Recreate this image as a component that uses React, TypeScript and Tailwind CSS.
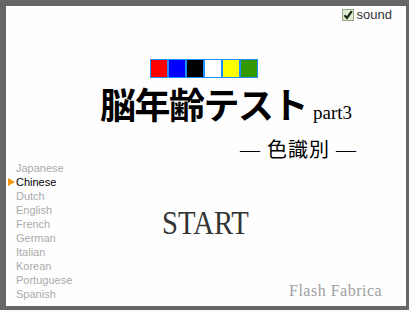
import { useState } from 'react';

const LANGS = ['Japanese', 'Chinese', 'Dutch', 'English', 'French', 'German', 'Italian', 'Korean', 'Portuguese', 'Spanish'];
const SWATCHES = ['bg-[#ff0000]', 'bg-[#0000ff]', 'bg-black', 'bg-white', 'bg-[#ffff00]', 'bg-[#339900]'];

export default function App() {
  const [sound, setSound] = useState(true);
  const [lang, setLang] = useState('Chinese');

  return (
    <div className="h-[313px] w-[412px] bg-[#fbfbfb]">
      <div className="flex h-[310px] w-[409px] flex-col border-t-[6px] border-r-[3px] border-b-[4px] border-l-[6px] border-[#666666] bg-[#fefefe]">
        {/* sound toggle */}
        <div className="flex justify-end pt-[3px] pr-[14px]">
          <label
            onClick={() => setSound(!sound)}
            className="flex cursor-pointer items-center gap-[3px] font-['Liberation_Sans',sans-serif] text-[13px] leading-[12px] text-[#333]"
          >
            <span className="flex h-[12px] w-[12px] items-center justify-center border border-[#9aa88a] bg-[#dfeccf]">
              {sound && (
                <svg width="10" height="10" viewBox="0 0 10 10">
                  <path d="M1.5 5.2 L4 8 L8.8 1.2" fill="none" stroke="#1a2a1a" strokeWidth="2.2" />
                </svg>
              )}
            </span>
            sound
          </label>
        </div>

        {/* color strip */}
        <div className="mt-[38px] flex pl-[144px]">
          {SWATCHES.map((c) => (
            <div key={c} className={`h-[19px] w-[18px] border border-[#1e8fff] ${c}`} />
          ))}
        </div>

        {/* title */}
        <div className="mt-[9px] flex items-end pl-[94px] font-['Liberation_Serif','Noto_Sans_CJK_JP',serif] text-black">
          <span className="text-[36px] leading-[40px] font-bold tracking-[-1.5px]">脳年齢テスト</span>
          <span className="ml-[6px] pb-[4px] text-[19px] leading-[20px]">part3</span>
        </div>
        <div className="mt-[12px] pl-[234px] font-['Liberation_Serif','Noto_Sans_CJK_JP',serif] text-[20px] leading-[22px] tracking-[1px] text-black">
          — 色識別 —
        </div>

        {/* lower area */}
        <div className="flex flex-1">
          <ul className="w-[120px] pl-[10px] font-['Liberation_Sans',sans-serif] text-[11px] leading-[14px]">
            {LANGS.map((l) => (
              <li
                key={l}
                onClick={() => setLang(l)}
                className={`relative cursor-pointer ${l === lang ? 'text-black' : 'text-[#aaaaaa]'}`}
              >
                {l === lang && (
                  <span className="absolute top-[3px] -left-[8px] h-0 w-0 border-y-[4px] border-l-[7px] border-y-transparent border-l-[#f59a10]" />
                )}
                {l}
              </li>
            ))}
          </ul>
          <div className="flex w-[150px] justify-start pt-[44px] pl-[36px]">
            <button className="h-fit origin-left font-['Liberation_Serif',serif] text-[33px] leading-[36px] text-[#333] [transform:scaleX(0.87)]">
              START
            </button>
          </div>
          <div className="flex flex-1 items-end pb-[6px] pl-[13px] font-['Liberation_Serif',serif] text-[16px] leading-[18px] tracking-[0.5px] text-[#a0a0a0]">
            Flash Fabrica
          </div>
        </div>
      </div>
    </div>
  );
}
